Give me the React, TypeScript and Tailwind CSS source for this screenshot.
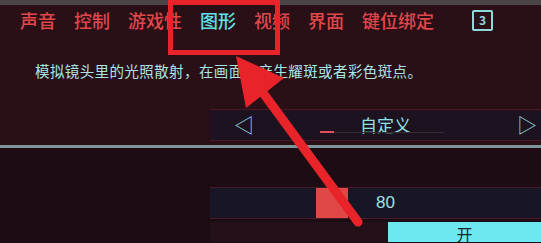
import React from 'react';

const tabs = ['声音', '控制', '游戏性', '图形', '视频', '界面', '键位绑定'];

const cjk = { fontFamily: '"Noto Sans CJK SC", "Noto Sans", sans-serif' };

const Annotation: React.FC = () => (
  <>
    <div className="absolute left-[168px] top-0 h-[55px] w-[112px] border-[5px] border-[#e8232a]" />
    <svg className="absolute left-0 top-0" width="541" height="243" viewBox="0 0 541 243">
      <line x1="358" y1="222" x2="258" y2="86" stroke="#e8232a" strokeWidth="9" strokeLinecap="round" />
      <polygon points="236,56 284,78 246,108" fill="#e8232a" />
    </svg>
  </>
);

const App: React.FC = () => {
  return (
    <div className="relative w-[541px] h-[243px] overflow-hidden bg-[#2a0f16]" style={cjk}>
      <div className="h-[5px] bg-[#4a4446]" />

      <div className="flex items-center h-[30px] pl-[20px] gap-[18px] text-[18px] font-medium leading-none">
        {tabs.map((t) => (
          <span key={t} className={t === '图形' ? 'text-[#5fe2e6]' : 'text-[#e0474a]'}>
            {t}
          </span>
        ))}
        <span className="ml-[20px] flex items-center justify-center w-[21px] h-[21px] border-2 border-[#8fd8dc] rounded-[2px] text-[12px] font-bold text-[#8fd8dc]">
          3
        </span>
      </div>

      <div className="pl-[35px] mt-[26px] text-[14.5px] leading-[20px] text-[#a8e6e6] tracking-[0.4px]">
        模拟镜头里的光照散射，在画面上产生耀斑或者彩色斑点。
      </div>

      <div className="ml-[210px] mt-[28px] h-[32px] flex items-center relative bg-[#1c1220] border-y border-[#4a1a24]">
        <span className="ml-[24px] text-[#8fd8dc] text-[20px] leading-none">◁</span>
        <span className="flex-1 text-center text-[17px] text-[#8fe2e4]">自定义</span>
        <span className="mr-[4px] text-[#8fd8dc] text-[20px] leading-none">▷</span>
        <div className="absolute left-[110px] bottom-[7px] h-[2px] w-[14px] bg-[#e05058]" />
        <div className="absolute left-[124px] bottom-[7px] h-[1px] w-[110px] bg-[#3a2a34]" />
      </div>

      <div className="mt-[4px] h-[3px] bg-[#7c949c]" />

      <div className="bg-[#1d0c13] h-[96px] pt-[39px]">
        <div className="ml-[210px] h-[32px] flex items-center bg-[#181626] border-y border-[#4a1a24]">
          <div className="ml-[106px] w-[32px] h-[30px] bg-[#e04848]" />
          <span className="ml-[28px] text-[17px] text-[#9fe2e4]" style={{ fontFamily: '"Liberation Sans", sans-serif' }}>
            80
          </span>
        </div>
        <div className="flex mt-[3px]">
          <div className="ml-[210px] w-[178px] h-[20px] bg-[#241018]" />
          <div className="flex-1 h-[20px] bg-[#6ee8f0] flex justify-center pt-[4px] text-[16px] text-[#1a2a2c] leading-none">
            开
          </div>
        </div>
      </div>

      <Annotation />
    </div>
  );
};

export default App;
